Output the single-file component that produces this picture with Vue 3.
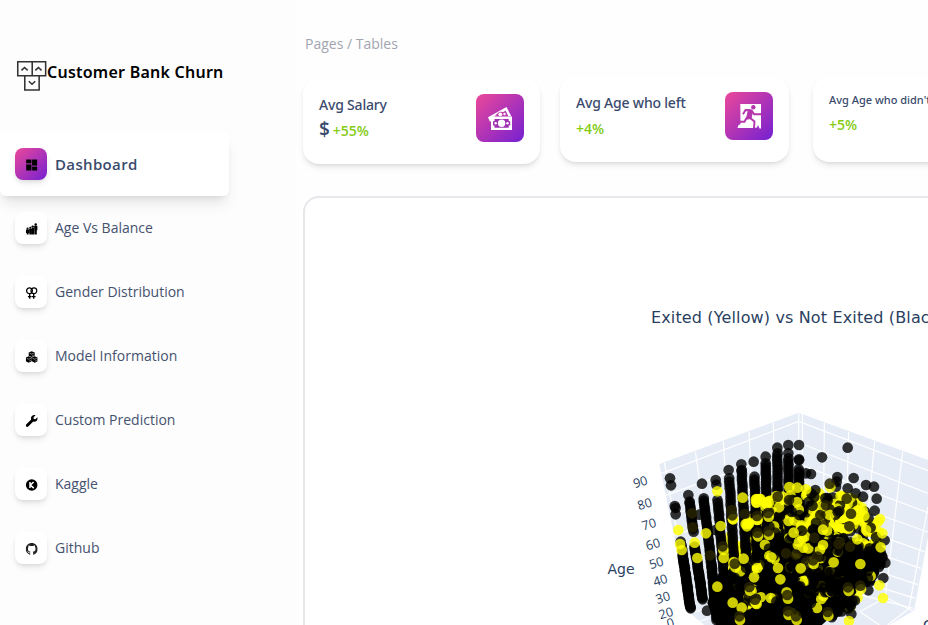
<script setup>
const nav = [
  { label: 'Dashboard', icon: 'dash', active: true },
  { label: 'Age Vs Balance', icon: 'people' },
  { label: 'Gender Distribution', icon: 'gender' },
  { label: 'Model Information', icon: 'cubes' },
  { label: 'Custom Prediction', icon: 'wrench' },
  { label: 'Kaggle', icon: 'kaggle' },
  { label: 'Github', icon: 'github' },
]

const ticks = [
  [151, 246, 90], [164, 312, 80], [177, 373, 70], [189, 433, 60],
  [199, 489, 50], [211, 541, 40], [219, 593, 30], [228, 640, 20], [241, 669, 0],
]

// Grid lines of the two back walls and the floor: x1, y1, x2, y2
const grid = [
  [213, 221, 626, 64], [225, 287, 626, 142], [236, 348, 626, 220], [246, 406, 626, 300],
  [223, 188, 305, 640], [316, 155, 380, 600], [400, 124, 430, 600], [477, 95, 500, 600], [550, 68, 560, 600],
  [626, 38, 626, 600], [637, 42, 637, 600],
  [626, 64, 1014, 212], [637, 132, 1014, 280], [637, 196, 1014, 338], [637, 262, 1014, 396], [637, 325, 1003, 455],
  [637, 385, 993, 505], [637, 440, 984, 554], [637, 490, 976, 595], [637, 540, 970, 625],
  [703, 68, 699, 500], [776, 96, 765, 500], [854, 123, 820, 500], [938, 155, 886, 590], [1014, 320, 956, 630],
  [888, 592, 810, 635], [810, 635, 868, 675], [886, 592, 970, 634], [956, 626, 893, 675],
  [300, 640, 350, 625], [330, 663, 356, 655],
]

// Seeded generator so that the cloud is the same on every load
let seed = 20
const rnd = () => {
  seed = (seed * 1664525 + 1013904223) % 4294967296
  return seed / 4294967296
}
const dots = []
const add = (x, y, k) => dots.push({ x: +x.toFixed(1), y: +y.toFixed(1), k })
const column = (x1, y1, x2, y2, step = 6) => {
  const n = Math.round((y2 - y1) / step)
  for (let i = 0; i <= n; i++) add(x1 + ((x2 - x1) * i) / n + rnd() * 2 - 1, y1 + ((y2 - y1) * i) / n, 'k')
}
const cluster = (cx, cy, rx, ry, n, yellow) => {
  for (let i = 0; i < n; i++) {
    const a = rnd() * Math.PI * 2
    const r = Math.sqrt(rnd())
    add(cx + Math.cos(a) * r * rx, cy + Math.sin(a) * r * ry, rnd() < yellow ? 'y' : 'k')
  }
}

const mass = '352,610 372,540 410,530 480,510 560,460 600,340 640,345 700,420 790,440 850,440 862,470 868,520 835,560 795,565 770,610 745,635 712,660 690,680 380,680'

cluster(660, 400, 90, 70, 90, 0.5)
cluster(440, 450, 50, 50, 26, 0.8)
cluster(520, 410, 60, 80, 50, 0.7)
column(254, 318, 256, 324)
column(272, 425, 277, 450, 12)
column(278, 462, 301, 622, 4)
column(299, 310, 310, 395, 8)
column(314, 440, 338, 598, 4)
column(341, 295, 365, 500, 7)
column(365, 500, 380, 660)
column(383, 300, 404, 550, 9)
column(418, 235, 436, 550, 10)
column(455, 213, 472, 550, 9)
column(493, 230, 505, 550, 9)
column(527, 190, 533, 480, 8)
column(562, 160, 566, 480, 9)
column(595, 175, 600, 470, 9)
column(627, 208, 629, 350, 7)
cluster(503, 310, 16, 16, 5, 1)
cluster(536, 312, 14, 14, 5, 1)
cluster(468, 372, 12, 12, 4, 1)
cluster(432, 497, 14, 14, 4, 1)
cluster(493, 515, 20, 26, 6, 0.8)
cluster(568, 292, 12, 40, 7, 0.6)
cluster(597, 295, 12, 40, 7, 0.6)
cluster(580, 350, 50, 30, 14, 0.3)
cluster(540, 415, 50, 40, 20, 0.15)

cluster(440, 590, 70, 80, 110, 0.05)
cluster(530, 540, 110, 80, 70, 0.14)
cluster(600, 620, 170, 50, 110, 0.12)
cluster(800, 490, 72, 68, 110, 0.08)
cluster(690, 500, 90, 90, 100, 0.18)
cluster(760, 585, 45, 45, 40, 0.15)
cluster(740, 345, 88, 60, 150, 0.82)
cluster(840, 400, 35, 50, 28, 0.8)
cluster(665, 335, 60, 60, 50, 0.45)
cluster(680, 430, 90, 45, 75, 0.25)
cluster(825, 470, 55, 40, 50, 0)
cluster(740, 540, 80, 40, 45, 0)

const scatter = {
  k: [
    [240, 235], [243, 256], [295, 285], [299, 305], [336, 251], [377, 240], [379, 254], [416, 210], [454, 193], [455, 210],
    [491, 185], [527, 170], [562, 143], [595, 135], [595, 160], [627, 135], [627, 178], [627, 181], [663, 222], [696, 172], [773, 143],
    [742, 231], [740, 245], [738, 260], [791, 234], [828, 255], [852, 260], [860, 296], [854, 332], [819, 290], [773, 265],
    [676, 270], [257, 343], [328, 344], [302, 625], [351, 632], [884, 421], [886, 488], [880, 534], [835, 571],
    [784, 642], [787, 602], [748, 333], [743, 337], [797, 280], [376, 390], [628, 345], [648, 220], [842, 383],
  ],
  y: [
    [265, 390], [270, 432], [275, 450], [314, 428], [322, 474], [348, 400], [382, 274], [382, 560], [401, 474], [392, 378],
    [429, 358], [428, 608], [455, 623], [458, 293], [461, 476], [467, 372], [498, 298], [501, 360], [502, 504], [500, 612],
    [536, 308], [530, 313], [567, 322], [544, 472], [571, 538], [611, 398], [627, 426], [564, 504], [622, 263], [648, 268],
    [699, 435], [699, 389], [731, 487], [743, 379], [811, 492], [802, 418], [828, 390], [823, 347], [870, 357],
    [877, 400], [872, 442], [868, 556], [879, 594], [777, 663], [492, 532], [632, 505],
  ],
  c: [
    [536, 350], [537, 405], [504, 409], [429, 357], [503, 359], [400, 450], [671, 492], [715, 647], [813, 568], [776, 573],
    [594, 596], [596, 645], [480, 572], [450, 660], [436, 502], [721, 262], [620, 660], [497, 610],
  ],
  d: [
    [306, 340], [308, 382], [360, 466], [425, 330], [464, 342], [597, 300], [563, 290],
    [588, 460], [618, 464], [648, 488], [683, 470], [746, 432], [780, 440],
    [770, 296], [708, 316], [783, 341], [778, 379], [700, 375], [673, 413], [691, 345],
  ],
}
</script>

<template>
  <div class="page">
    <aside class="sidebar">
      <div class="brand">
        <svg class="logo" viewBox="0 0 30 30" fill="none" stroke="#333" stroke-width="1.5">
          <path d="M1.7 1.7h14v13.6h-14zM15.7 1.7h13v13.6h-13zM8.500 15.300h13.900V29H8.500z" />
          <path d="M5.300 10l3-2.800 3 2.800M18.700 10l3-2.800 3 2.800M12.400 20.600l3.100 2.900 3.100-2.900" />
        </svg>
        <span>Customer Bank Churn</span>
      </div>
      <nav>
        <a v-for="n in nav" :key="n.label" class="item" :class="{ active: n.active }">
          <span class="tile">
            <svg v-if="n.icon === 'dash'" viewBox="0 0 12 12">
              <path d="M.5.5h5.200v3.400H.5zM.5 5.400h5.200v6H.5zM6.400.5h5.100v6H6.400zM6.400 8h5.100v3.400H6.400z" />
              <path d="M.5 3.900h5.200v1.500H.5zM6.400 6.500h5.100V8H6.400z" opacity=".35" />
            </svg>
            <svg v-else-if="n.icon === 'people'" viewBox="0 0 12 12">
              <circle cx="1.900" cy="5.600" r="1.100" /><circle cx="4.600" cy="4.800" r="1.100" /><circle cx="7" cy="3.600" r="1.200" /><circle cx="10" cy="1.500" r="1.200" />
              <path d="M.2 6.600h3.200v3.400H2.900v1.500H1V10H.2zM3.400 5.900h2.400v5.600H3.700zM5.800 4.700h2.500v6.800H5.900zM8.400 2.800h3.400v4.500h-.7v4.200H8.700z" />
            </svg>
            <svg v-else-if="n.icon === 'gender'" viewBox="0 0 12 12" fill="none" stroke="#000" stroke-width="1.300">
              <circle cx="3.800" cy="3.800" r="2.900" /><circle cx="8.200" cy="3.800" r="2.900" />
              <path d="M4 6.800v5M2.200 9.700h3.600M8 6.800v5M6.200 9.700h3.600" />
            </svg>
            <svg v-else-if="n.icon === 'cubes'" viewBox="0 0 12 12">
              <path d="M6 .2l3 1.200v3.400L6 6.100 3 4.800V1.400zM3 5.200l2.900 1.300v3.700L3 11.800.1 10.200V6.500zM9 5.200l2.900 1.300v3.700L9 11.800l-2.900-1.600V6.500z" />
              <path d="M3.900 2.200L6 3.100l2.100-.9M1 7.300l2.100.9 2.100-.9M6.800 7.300l2.100.9 2.100-.9M6.500 4.900l1.600-.8M3.600 10.200l1.600-.9M9.400 10.200l1.600-.9" fill="none" stroke="#fff" stroke-width=".5" />
            </svg>
            <svg v-else-if="n.icon === 'wrench'" viewBox="0 0 512 512">
              <path d="M507.730 109.100c-2.240-9.030-13.540-12.090-20.120-5.510l-74.360 74.360-67.880-11.310-11.310-67.880 74.360-74.360c6.620-6.620 3.430-17.900-5.660-20.160-47.380-11.740-99.550.91-136.580 37.930-39.640 39.640-50.550 97.100-34.050 147.200L18.740 402.760c-24.990 24.990-24.990 65.510 0 90.500 24.990 24.990 65.510 24.990 90.500 0l213.210-213.210c50.120 16.710 107.470 5.680 147.370-34.220 37.070-37.070 49.700-89.320 37.910-136.730z" />
            </svg>
            <svg v-else-if="n.icon === 'kaggle'" viewBox="0 0 12 12">
              <circle cx="6" cy="6" r="5.800" />
              <path d="M4.300 2.900v6.200M7.900 3L4.700 6l3.300 3.100" fill="none" stroke="#fff" stroke-width="1.500" />
            </svg>
            <svg v-else viewBox="0 0 16 16">
              <path fill="#222" d="M8 0C3.580 0 0 3.580 0 8c0 3.540 2.290 6.530 5.470 7.590.4.070.55-.17.55-.38 0-.19-.01-.82-.01-1.490-2.010.37-2.530-.49-2.690-.94-.09-.23-.48-.94-.82-1.130-.28-.15-.68-.52-.01-.53.63-.01 1.080.58 1.230.82.72 1.210 1.870.87 2.330.66.07-.52.28-.87.51-1.070-1.780-.2-3.640-.89-3.640-3.950 0-.87.31-1.590.82-2.150-.08-.2-.36-1.020.08-2.120 0 0 .67-.21 2.200.82.64-.18 1.320-.27 2-.27s1.360.09 2 .27c1.530-1.040 2.200-.82 2.200-.82.44 1.100.16 1.920.08 2.120.51.56.82 1.270.82 2.150 0 3.070-1.870 3.750-3.650 3.950.29.25.54.73.54 1.480 0 1.070-.01 1.930-.01 2.200 0 .21.15.46.55.38A8.010 8.010 0 0 0 16 8c0-4.420-3.580-8-8-8z" />
            </svg>
          </span>
          <span class="label">{{ n.label }}</span>
        </a>
      </nav>
    </aside>

    <main class="main">
      <div class="crumbs">Pages / Tables</div>
      <div class="cards">
        <section class="card salary">
          <div>
            <p class="title">Avg Salary</p>
            <p class="figure"><b>$</b> <span class="up">+55%</span></p>
          </div>
          <span class="badge">
            <svg viewBox="0 0 48 48">
              <path d="M12 23.300L30.500 13l4.800 9.200h-3l-2.600-5.500-14.400 7.300v3.400h-1.500z" fill="#fff" />
              <path d="M18 21.500c2.600 0 3-3 6-3.600 2.500-.6 4 1.300 5.500-.5l2 4.500z" fill="#c43ba8" />
              <circle cx="24.300" cy="20.300" r="1.900" fill="#fff" /><circle cx="28.500" cy="20" r="1.200" fill="#fff" />
              <path d="M15 22.500h21v13.500H15z" fill="#fff" />
              <path d="M18.500 25h14.200v2.300h1.500v4.300h-1.500v2.100H18.500v-2.100H17v-4.300h1.500z" fill="#a02fb3" />
              <circle cx="25.600" cy="29.300" r="3.700" fill="#fff" /><circle cx="19.700" cy="29.300" r="1.200" fill="#fff" /><circle cx="31.500" cy="29.300" r="1.200" fill="#fff" />
            </svg>
          </span>
        </section>
        <section class="card left">
          <div>
            <p class="title">Avg Age who left</p>
            <p class="figure"><span class="up">+4%</span></p>
          </div>
          <span class="badge">
            <svg viewBox="0 0 48 48">
              <path d="M15.300 12H36v24.500h-1.500L33 33l-1 2.500-4 .5H12.500l1-3 2-.8z" fill="#fff" />
              <circle cx="28.300" cy="15.300" r="2.200" fill="#b535ad" />
              <path d="M18 22.200l2.500-4.200 6 .4 2.700 3.800H36M21.500 26l-2 3.800h-7M24.500 25.500l5 4-.5 6.500" fill="none" stroke="#b535ad" stroke-width="1.900" />
              <path d="M23.700 17.500l4 1.500-1.700 7.500-4.800.7z" fill="#b535ad" stroke="#b535ad" />
            </svg>
          </span>
        </section>
        <section class="card stayed">
          <div>
            <p class="title">Avg Age who didn't leave</p>
            <p class="figure"><span class="up">+5%</span></p>
          </div>
          <span class="badge"></span>
        </section>
      </div>

      <section class="chart">
        <h2>Exited (Yellow) vs Not Exited (Black)</h2>
        <svg class="plot" viewBox="0 0 1014 675">
          <path d="M208 192L626 38l388 142v231L972 632l-75 43H343l-43-35z" fill="#e5ecf6" />
          <line v-for="(g, i) in grid" :key="i" :x1="g[0]" :y1="g[1]" :x2="g[2]" :y2="g[3]" class="grid" />
          <polygon :points="mass" />
          <circle v-for="(d, i) in dots" :key="'m' + i" :cx="d.x" :cy="d.y" r="16" :class="d.k" />
          <template v-for="k in ['k', 'd', 'y']" :key="k">
            <circle v-for="(p, i) in scatter[k]" :key="i" :cx="p[0]" :cy="p[1]" r="16" :class="k" />
          </template>
          <template v-for="(p, i) in scatter.c" :key="'c' + i">
            <circle :cx="p[0]" :cy="p[1]" r="16" class="y" />
            <circle :cx="p[0] - 2" :cy="p[1] - 11" r="16" class="d" />
          </template>
          <text v-for="t in ticks" :key="t[2]" class="tick" :transform="`translate(${t[0]} ${t[1]}) rotate(-17)`" y="13">{{ t[2] }}</text>
          <text class="axis" x="93" y="522">Age</text>
          <text class="axis" x="1014" y="690">C</text>
        </svg>
      </section>
    </main>
  </div>
</template>

<style>
body { background: #fefefe; overflow: hidden; }
</style>
<style scoped>
.page { display: flex; width: 928px; height: 625px; overflow: hidden; font-family: "Open Sans", sans-serif; font-size: 14px; color: #3a4b6d; }
.sidebar { flex: none; width: 295px; background: #fdfdfd; }
.brand { display: flex; align-items: center; height: 132px; box-sizing: border-box; padding: 12px 0 0 16px; font: 600 16px/24px "Noto Sans", sans-serif; letter-spacing: .24px; color: #000; }
.brand span { padding-bottom: 1px; }
.logo { width: 31px; height: 31px; margin-top: 7px; margin-left: -.5px; margin-right: .5px; }
.item { display: flex; align-items: center; gap: 8px; width: 229px; height: 64px; box-sizing: border-box; padding-left: 15px; color: #45526f; }
.label { padding-bottom: 2px; }
.active { background: #fff; border-radius: 6px; box-shadow: 0 10px 14px -3px rgba(0, 0, 0, .1), 0 4px 6px -4px rgba(0, 0, 0, .1); font-weight: 600; font-size: 15px; letter-spacing: .35px; color: #3a4b6d; }
.active .label { padding-bottom: 0; }
.tile { display: flex; align-items: center; justify-content: center; width: 32px; height: 32px; border-radius: 8px; background: #fff; box-shadow: 0 4px 6px -1px rgba(0, 0, 0, .1), 0 2px 4px -2px rgba(0, 0, 0, .1); }
.tile svg { width: 12px; height: 12px; margin: 1px 0 0 1px; transform: translateX(-.3px); }
.active .tile, .badge { background: linear-gradient(135deg, #ec4899, #7420d2); }
.main { flex: none; width: 700px; padding-left: 8px; }
.crumbs { padding: 34px 0 0 2px; line-height: 20px; color: #a0a5b0; }
.cards { display: flex; align-items: flex-start; padding-top: 22px; }
.card { display: flex; flex: none; justify-content: space-between; height: 86px; box-sizing: border-box; padding: 16px; border-radius: 16px; background: #fff; box-shadow: 0 4px 6px -1px rgba(0, 0, 0, .1), 0 2px 4px -2px rgba(0, 0, 0, .1); }
.card p { margin: 0; white-space: nowrap; }
.salary { width: 237px; margin-top: 2px; margin-right: 20px; }
.left { width: 229px; margin-right: 24px; }
.stayed { width: 260px; }
.title { font: 500 14px/22px "Noto Sans", sans-serif; letter-spacing: -.2px; }
.figure { line-height: 26px; font-weight: 600; }
.figure b { font-size: 19px; font-weight: 600; line-height: 26px; letter-spacing: -.7px; }
.left .figure { line-height: 30px; }
.stayed .title { font-size: 11px; line-height: 16px; letter-spacing: 0; }
.stayed .figure { line-height: 34px; }
.up { color: #84cc16; }
.badge { flex: none; width: 48px; height: 48px; border-radius: 8px; }
.badge svg { display: block; width: 48px; height: 48px; }
.chart { width: 760px; height: 600px; box-sizing: border-box; margin-top: 32px; border: 2px solid #e5e7eb; border-radius: 16px; background: #fff; }
.chart h2 { margin: 0; padding: 107px 0 0 346px; font: 400 16px/26px "DejaVu Sans", sans-serif; letter-spacing: .14px; color: #2a3f5f; white-space: nowrap; }
.plot { display: block; width: 338px; height: 225px; margin: 69px 0 0 285px; }
.grid { stroke: #fff; stroke-width: 3.500; }
.k { fill: #000; fill-opacity: .8; }
.y { fill: #ff0; fill-opacity: .8; }
.d { fill: #262200; fill-opacity: .85; }
.tick { font: 38px "Open Sans", sans-serif; fill: #2a3f5f; text-anchor: middle; }
.axis { font: 42px "DejaVu Sans", sans-serif; fill: #2a3f5f; text-anchor: middle; }
</style>
